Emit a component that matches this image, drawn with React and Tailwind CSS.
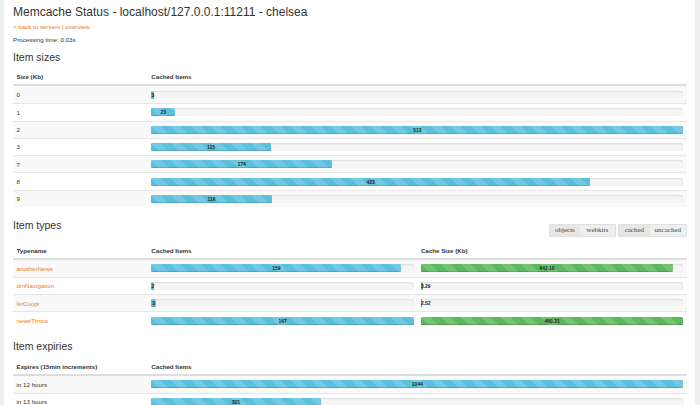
import React from 'react';

const sizes = [
  { size: '0', items: 3 },
  { size: '1', items: 23 },
  { size: '2', items: 513 },
  { size: '3', items: 115 },
  { size: '7', items: 174 },
  { size: '8', items: 423 },
  { size: '9', items: 116 },
];

const types = [
  { name: 'anotherNews', items: 159, kb: '442.10' },
  { name: 'dmNavigation', items: 2, kb: '3.29' },
  { name: 'lsrCoopi', items: 3, kb: '2.52' },
  { name: 'newsThrice', items: 167, kb: '460.21' },
];

const expiries = [
  { label: 'in 12 hours', items: 1044, pct: 100 },
  { label: 'in 13 hours', items: 301, pct: 31.8 },
];

function Bar({ pct, label, green }) {
  return (
    <div className="w-full h-[8px] rounded-[2px] bg-[#f5f5f5] shadow-[inset_0_1px_2px_rgba(0,0,0,0.1)]">
      <div
        className={`h-full rounded-[1px] text-center whitespace-nowrap text-[5px] leading-[8px] font-bold text-[#222] bg-[linear-gradient(45deg,rgba(255,255,255,0.15)_25%,transparent_25%,transparent_50%,rgba(255,255,255,0.15)_50%,rgba(255,255,255,0.15)_75%,transparent_75%,transparent)] bg-size-[20px_20px] shadow-[inset_0_-1px_0_rgba(0,0,0,0.15)] ${green ? 'bg-[#5cb85c]' : 'bg-[#5bc0de]'}`}
        style={{ width: `${pct}%` }}
      >
        {label}
      </div>
    </div>
  );
}

function HeaderRow({ children }) {
  return (
    <div className="flex items-center h-[16px] border-b-2 border-[#dddddd] font-bold">
      {children}
    </div>
  );
}

function Row({ i, children }) {
  return (
    <div className={`flex items-center h-[17.3px] ${i > 0 ? 'border-t border-[#e6e6e6]' : ''} ${i % 2 === 0 ? 'bg-[#f9f9f9]' : 'bg-white'}`}>
      {children}
    </div>
  );
}

export default function App() {
  const maxSize = Math.max(...sizes.map(s => s.items));
  const maxTypeItems = Math.max(...types.map(t => t.items));
  const maxKb = Math.max(...types.map(t => parseFloat(t.kb)));

  return (
    <div className="min-h-screen bg-[#eeeeee] pl-[4px] pr-[5px] font-['Liberation_Sans',Arial,sans-serif] text-[#333] text-[6.2px]">
      <div className="bg-white min-h-screen pl-[9px] pr-[8px] pt-[5px]">
        <h1 className="text-[12px] leading-[14px] font-normal">Memcache Status - localhost/127.0.0.1:11211 - chelsea</h1>
        <div className="mt-[4px] leading-[8px] text-[#e67e22]">
          <a href="#">&lt; back to servers</a> | <a href="#">overview</a>
        </div>
        <p className="mt-[5px] leading-[8px]">Processing time: 0.03s</p>

        {/* item sizes */}
        <h2 className="mt-[7px] text-[10.5px] leading-[12px]">Item sizes</h2>
        <div className="mt-[7px]">
          <HeaderRow>
            <div className="w-[20%] px-[3.5px]">Size (Kb)</div>
            <div className="w-[80%] px-[3.5px]">Cached Items</div>
          </HeaderRow>
          {sizes.map((s, i) => (
            <Row key={s.size} i={i}>
              <div className="w-[20%] px-[3.5px]">{s.size}</div>
              <div className="w-[80%] px-[3.5px]">
                <Bar pct={(s.items / maxSize) * 100} label={s.items} />
              </div>
            </Row>
          ))}
        </div>

        {/* item types */}
        <div className="mt-[12px] flex justify-between items-start">
          <h2 className="text-[10.5px] leading-[12px]">Item types</h2>
          <div className="mt-[5px] flex gap-[2.5px] font-['Liberation_Serif',serif] text-[7px] text-[#444]">
            <div className="flex border border-[#e0e0e0] rounded-[1px]">
              <button className="h-[11px] px-[5px] bg-[#e6e6e6]">objects</button>
              <button className="h-[11px] px-[6.5px] bg-[#efefef]">webkits</button>
            </div>
            <div className="flex border border-[#e0e0e0] rounded-[1px]">
              <button className="h-[11px] px-[5.5px] bg-[#e6e6e6]">cached</button>
              <button className="h-[11px] px-[5px] bg-[#efefef]">uncached</button>
            </div>
          </div>
        </div>
        <div className="mt-[6.5px]">
          <HeaderRow>
            <div className="w-[20%] px-[3.5px]">Typename</div>
            <div className="w-[40%] px-[3.5px]">Cached Items</div>
            <div className="w-[40%] px-[3.5px]">Cache Size (Kb)</div>
          </HeaderRow>
          {types.map((t, i) => (
            <Row key={t.name} i={i}>
              <div className="w-[20%] px-[3.5px]">
                <a href="#" className="text-[#e67e22]">{t.name}</a>
              </div>
              <div className="w-[40%] px-[3.5px]">
                <Bar pct={(t.items / maxTypeItems) * 100} label={t.items} />
              </div>
              <div className="w-[40%] px-[3.5px]">
                <Bar pct={(parseFloat(t.kb) / maxKb) * 100} label={t.kb} green />
              </div>
            </Row>
          ))}
        </div>

        {/* item expiries */}
        <h2 className="mt-[10.8px] text-[10.5px] leading-[12px]">Item expiries</h2>
        <div className="mt-[8px]">
          <HeaderRow>
            <div className="w-[20%] px-[3.5px]">Expires (15min increments)</div>
            <div className="w-[80%] px-[3.5px]">Cached Items</div>
          </HeaderRow>
          {expiries.map((e, i) => (
            <Row key={e.label} i={i}>
              <div className="w-[20%] px-[3.5px]">{e.label}</div>
              <div className="w-[80%] px-[3.5px]">
                <Bar pct={e.pct} label={e.items} />
              </div>
            </Row>
          ))}
        </div>
      </div>
    </div>
  );
}
